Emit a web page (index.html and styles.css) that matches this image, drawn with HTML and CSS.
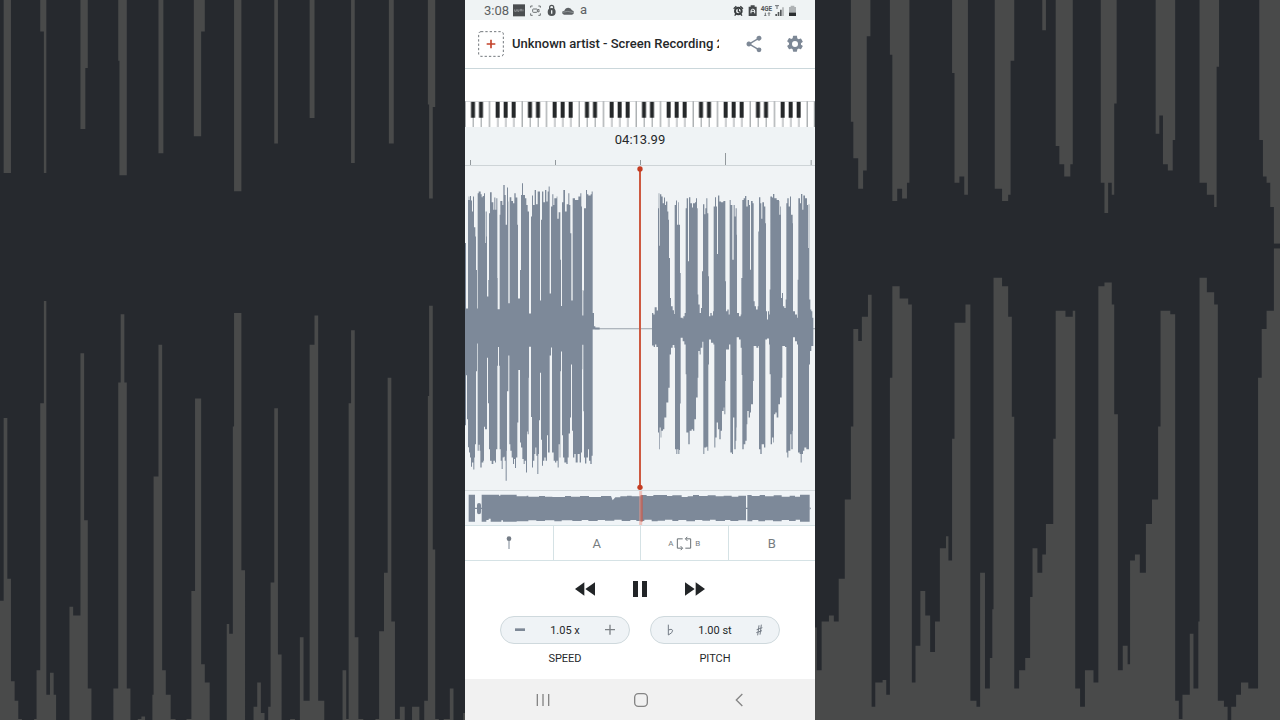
FILE: index.html
```html
<!DOCTYPE html>
<html lang="en">
<head>
<meta charset="utf-8">
<meta name="viewport" content="width=device-width, initial-scale=1">
<title>Music player</title>
<link rel="stylesheet" href="styles.css">
</head>
<body>
<svg class="backdrop" viewBox="0 290 1050 591" preserveAspectRatio="xMidYMid slice" aria-hidden="true">
  <rect class="paper" x="-500" y="0" width="2050" height="1400"/>
  <path class="wave left-wave"/>
  <path class="wave right-wave"/>
  <path class="wave" d="M1044 490h8v4h-8z"/>
</svg>

<main class="phone">
  <div class="status">
    <span class="clock">3:08</span>
    <svg class="status-left" viewBox="0 0 186 42" aria-hidden="true">
      <rect x="0" y="4" width="36" height="36" fill="#4b4e50"/>
      <path d="M5 19v6h5v-6m4 0v6h4v-6m4 6v-6h4v6m4-6v6" stroke="#a7abad" stroke-width="2" fill="none"/>
      <g fill="none" stroke="#6c7072" stroke-width="3"><path d="M53 14V9h6M76 9h6v5M53 31v6h6M76 37h6v-6"/><rect x="59" y="18" width="14" height="10" rx="2"/><path d="M73 21l5-2v8l-5-2"/></g>
      <path d="M110 18v-5a6 6 0 0 1 12 0v6" fill="none" stroke="#505456" stroke-width="4"/>
      <circle cx="116" cy="27" r="12" fill="#505456"/><path d="M116 22v10" stroke="#eff3f4" stroke-width="4"/>
      <path d="M153 35q-6-1-6-7 1-5 7-5 3-9 12-9 8 0 11 8 6 1 6 7-1 5-6 6z" fill="#5e6265"/>
      <path d="M147 28q16-6 36 1" stroke="#a8adaf" stroke-width="2" fill="none"/>
    </svg>
    <span class="letter">a</span>
    <svg class="status-right" viewBox="0 0 204 42" aria-hidden="true">
      <g fill="none" stroke="#383c3e"><circle cx="22" cy="24" r="10" stroke-width="6"/><path d="M22 18v7l5 3M8 17l8-7M28 10l8 7M15 33l-4 5M29 33l4 5" stroke-width="4"/></g>
      <path d="M53 11h6V7h12v4h6v28H53z" fill="#44484a"/><path d="M60 31v-7a5 5 0 0 1 11 0v7m-11-6h11" fill="none" stroke="#eff3f4" stroke-width="3"/>
      <text class="network" x="89" y="23">4GE</text>
      <path d="M103 29v10m-3-3l3 3 3-3M114 39V29m-3 3l3-3 3 3M132 8h12M138 8v10" fill="none" stroke="#6c7072" stroke-width="3"/>
      <g fill="#54585a"><path d="M133 33h5v6h-5zM140 27h5v12h-5zM147 20h5v19h-5z"/><path d="M154 13h4v26h-4z" fill="#a2a6a8"/></g>
      <path d="M174 12h5V8h11v4h5v27h-21z" fill="#aeb2b4"/><path d="M174 29h21v10h-21z" fill="#2b2e30"/>
    </svg>
  </div>

  <header class="header">
    <button class="icon-button add" aria-label="Open track">
      <svg viewBox="0 0 78 78"><rect x="2" y="2" width="74" height="74" rx="7" fill="#fff" stroke="#72777c" stroke-width="3" stroke-dasharray="7 6"/><path d="M39 26v26M26 39h26" stroke="#c4432b" stroke-width="5"/></svg>
    </button>
    <h1 class="title">Unknown artist - Screen Recording 2</h1>
    <button class="icon-button share" aria-label="Share">
      <svg viewBox="0 0 24 24" fill="#7d8896"><path d="M18 16.08c-.76 0-1.44.3-1.96.77L8.91 12.7c.05-.23.09-.46.09-.7s-.04-.47-.09-.7l7.05-4.11A3 3 0 1 0 15 5c0 .24.04.47.09.7L8.04 9.81A3 3 0 1 0 6 15c.79 0 1.5-.31 2.04-.81l7.12 4.16c-.05.21-.08.43-.08.65A2.92 2.92 0 1 0 18 16.08z"/></svg>
    </button>
    <button class="icon-button settings" aria-label="Settings">
      <svg viewBox="0 0 24 24" fill="#7d8896"><path d="M19.14 12.94c.04-.3.06-.61.06-.94s-.02-.64-.07-.94l2.03-1.58a.49.49 0 0 0 .12-.61l-1.92-3.32a.49.49 0 0 0-.59-.22l-2.39.96a7.3 7.3 0 0 0-1.62-.94l-.36-2.54A.48.48 0 0 0 13.92 2h-3.84a.48.48 0 0 0-.48.41l-.36 2.54c-.59.24-1.13.57-1.62.94l-2.39-.96a.49.49 0 0 0-.59.22L2.72 8.47c-.12.21-.08.47.12.61l2.03 1.58c-.05.3-.07.62-.07.94s.02.64.07.94l-2.03 1.58a.49.49 0 0 0-.12.61l1.92 3.32c.12.22.37.29.59.22l2.39-.96c.5.38 1.03.7 1.62.94l.36 2.54c.05.24.24.41.48.41h3.84c.24 0 .44-.17.48-.41l.36-2.54c.59-.24 1.13-.56 1.62-.94l2.39.96c.22.08.47 0 .59-.22l1.92-3.32a.49.49 0 0 0-.12-.61zM12 15.6a3.6 3.6 0 1 1 0-7.2 3.6 3.6 0 0 1 0 7.2z"/></svg>
    </button>
  </header>

  <svg class="keys" viewBox="0 0 1050 78" preserveAspectRatio="none" aria-hidden="true">
    <defs>
      <pattern id="octave" x="-1" y="0" width="171" height="78" patternUnits="userSpaceOnUse">
        <rect width="171" height="78" fill="#fff"/>
        <path d="M1.500 0V78M74.500 0V78" stroke="#868c8f" stroke-width="3"/>
        <path d="M25.500 40V78M49.500 40V78M99.500 40V78M123.500 40V78M147.500 40V78" stroke="#93999c" stroke-width="3"/>
        <path d="M19 2h12v48H19zM43 2h12v48H43zM93 2h12v48H93zM117 2h12v48h-12zM141 2h12v48h-12z" fill="#25282a"/>
      </pattern>
    </defs>
    <rect width="1050" height="78" fill="url(#octave)"/>
    <path d="M1030 0h20v78h-20z" fill="#fff"/>
    <path d="M1048 0V78" stroke="#868c8f" stroke-width="3"/>
    <path d="M0 1H1050" stroke="#b9bec1" stroke-width="2"/>
  </svg>

  <section class="timeline">
    <time class="position">04:13.99</time>
    <svg class="ruler" viewBox="0 9 1050 39" preserveAspectRatio="none" aria-hidden="true">
      <path d="M16.500 30V45M271.500 30V45M526.500 30V45M781.500 9V45M1038.500 30V45" stroke="#92989c" stroke-width="3"/>
      <path d="M0 46.500H1050" stroke="#ced4d7" stroke-width="3"/>
    </svg>
  </section>

  <svg class="stage" viewBox="0 3 1050 975" preserveAspectRatio="none" role="img" aria-label="Waveform">
    <path d="M390 491H640V494H390zM1044 491h6v3h-6z" fill="#99a2ab"/>
    <path class="wave left-wave"/>
    <path class="wave right-wave"/>
    <path d="M525 12V972" stroke="#cd5940" stroke-width="6"/>
    <circle cx="525" cy="12" r="8" fill="#c43c22"/><circle cx="525" cy="970" r="8" fill="#c43c22"/>
  </svg>

  <svg class="overview" viewBox="0 0 1050 102" preserveAspectRatio="none" role="img" aria-label="Track overview">
    <path class="wave" d="M11 11H30V92H11zM30 50H52V54H30zM36 42q0-6 6-6t6 6v22q0 6-6 6t-6-6zM840 50H850V54H840zM1034 48l4 4-4 5z"/>
    <path class="wave" d="M50 11H102V14H106V11H155V16H185V14H190V17H222V15H240V17H262V18H300V15H318V17H345V15H372V18H408V15H438L443 28L451 19H466V16H486V14H500V16H530V12H545V15H565V12H606V15H622V13H650V18H668V16H684V12H702V15H728V13H752V16H776V14H800V17H820V14H843V88H820V90H796V87H780V90H752V86H735V89H712V87H690V91H664V87H640V90H622V86H600V89H578V91H560V86H538V90H514V87H496V90H470V86H448V89H420V87H398V90H370V87H350V90H322V88H290V91H268V88H240V90H214V88H190V91H155V92H114V88H109V92H77V83H71V87H64V92H50z"/>
    <path class="wave" d="M847 12H860V15H884V12H900V16H926V13H950V17H974V14H990V17H1005V11H1034V92H1005V86H992V90H972V87H950V91H924V88H900V91H880V87H862V91H847z"/>
    <path d="M527 0V102" stroke="#ee9b8d" stroke-width="9" opacity=".55"/>
    <path d="M530 12V92" stroke="#bd5b50" stroke-width="7" opacity=".7"/>
  </svg>

  <div class="loop-bar">
    <button aria-label="Add marker"><svg class="marker-icon" viewBox="0 0 18 42"><path d="M9 8v31" stroke="#7d8896" stroke-width="3"/><circle cx="9" cy="8" r="7" fill="#747c86"/></svg></button>
    <button>A</button>
    <button class="loop"><span>A</span><svg class="loop-icon" viewBox="0 0 48 44" fill="none" stroke="#697075" stroke-width="3"><path d="M18 36H4V8h16M30 8h14v28H28"/><path d="M34 2l-6 6 6 6M14 30l6 6-6 6"/></svg><span>B</span></button>
    <button>B</button>
  </div>

  <section class="controls">
    <div class="transport">
      <button aria-label="Rewind"><svg class="skip-icon" viewBox="0 0 60 42" fill="#222527"><path d="M0 21L28 1v40zM31 21L60 1v40z"/></svg></button>
      <button aria-label="Pause"><svg class="pause-icon" viewBox="0 0 42 48" fill="#222527"><path d="M0 0h15v48H0zM27 0h15v48H27z"/></svg></button>
      <button aria-label="Fast forward"><svg class="skip-icon" viewBox="0 0 60 42" fill="#222527"><path d="M60 21L32 1v40zM29 21L0 1v40z"/></svg></button>
    </div>
    <div class="adjusters">
      <div class="adjuster" role="group" aria-labelledby="speed">
        <div class="pill">
          <button aria-label="Slower"><svg viewBox="0 0 36 36"><path d="M3 17h30" stroke="#7d8896" stroke-width="8"/></svg></button>
          <output>1.05 x</output>
          <button aria-label="Faster"><svg viewBox="0 0 36 36"><path d="M3 17h30M18 2v30" stroke="#7d8287" stroke-width="4"/></svg></button>
        </div>
        <span class="caption" id="speed">SPEED</span>
      </div>
      <div class="adjuster" role="group" aria-labelledby="pitch">
        <div class="pill">
          <button aria-label="Lower pitch"><svg viewBox="0 0 36 36" fill="none" stroke="#747c86" stroke-width="3"><path d="M13 2v31q14-7 13-14-3-6-13-1"/></svg></button>
          <output>1.00 st</output>
          <button aria-label="Raise pitch"><svg viewBox="0 0 36 36" fill="none" stroke="#747c86" stroke-width="3"><path d="M15 4l-4 30M22 2l-4 30M8 17l17-6M7 26l17-6"/></svg></button>
        </div>
        <span class="caption" id="pitch">PITCH</span>
      </div>
    </div>
  </section>

  <nav class="nav">
    <button aria-label="Recent apps"><svg viewBox="0 0 42 42" stroke="#858585" stroke-width="4"><path d="M4 3v36M21 3v36M38 3v36"/></svg></button>
    <button aria-label="Home"><svg viewBox="0 0 42 42" fill="none" stroke="#858585" stroke-width="4"><rect x="2" y="2" width="38" height="38" rx="11"/></svg></button>
    <button aria-label="Back"><svg viewBox="0 0 42 42" fill="none" stroke="#858585" stroke-width="4"><path d="M31 3L13 21l18 18"/></svg></button>
  </nav>
</main>
<script src="wave.js"></script>
</body>
</html>
```
FILE: styles.css
```css
* { box-sizing: border-box; }

body {
  margin: 0;
  background: #000;
  color: #25282a;
  font-family: Roboto, "Liberation Sans", sans-serif;
  font-size: 13px;
}

svg { display: block; }

button {
  display: flex;
  align-items: center;
  justify-content: center;
  margin: 0;
  padding: 0;
  border: 0;
  background: none;
  color: inherit;
  font: inherit;
}

.backdrop {
  position: fixed;
  inset: 0;
  width: 100%;
  height: 100%;
  opacity: 0.3;
}

.paper { fill: #f0f3f5; }
.wave { fill: #7d8999; }

.phone {
  position: relative;
  display: flex;
  flex-direction: column;
  width: 100%;
  max-width: 350px;
  min-height: 100vh;
  margin: 0 auto;
  background: #fff;
}

.status {
  display: flex;
  align-items: center;
  height: 20px;
  padding: 0 16px 0 19px;
  background: #eff3f4;
  color: #5c6062;
}

.clock { width: 29px; padding-top: 2px; line-height: 18px; }
.status-left { width: 62px; height: 14px; flex: none; }
.letter { margin-left: 5px; line-height: 20px; }
.status-right { width: 68px; height: 14px; flex: none; margin-left: auto; }
.network { font-size: 19px; font-weight: 700; fill: #54585a; }

.header {
  display: flex;
  align-items: center;
  height: 49px;
  padding: 0 10px 0 13px;
  border-bottom: 1px solid #cbd7db;
}

.icon-button { flex: none; }
.add svg { width: 26px; height: 26px; }
.title {
  flex: 1;
  min-width: 0;
  max-width: 207px;
  margin: 0 0 0 8px;
  overflow: hidden;
  white-space: nowrap;
  font-size: 13px;
  font-weight: 500;
  line-height: 20px;
}
.share { margin-left: auto; }
.share svg, .settings svg { width: 20px; height: 20px; }
.settings { margin-left: 21px; }

.keys { width: 100%; height: 26px; margin-top: 32px; }

.timeline { background: #eff3f5; text-align: center; }
.position { display: block; line-height: 26px; }
.ruler { width: 100%; height: 13px; }

.stage {
  flex: 1 0 300px;
  width: 100%;
  background: #f0f3f5;
}

.overview {
  width: 100%;
  height: 35px;
  border-top: 1px solid #d5dbde;
  background: #f0f4f7;
}

.loop-bar {
  display: grid;
  grid-template-columns: repeat(4, 1fr);
  height: 36px;
  border-top: 1px solid #d5e2e5;
  border-bottom: 1px solid #d5e2e5;
  color: #777c80;
}
.loop-bar button + button { border-left: 1px solid #d5e2e5; }
.marker-icon { width: 6px; height: 14px; }
.loop-bar .loop { gap: 3px; font-size: 8px; }
.loop-icon { width: 16px; height: 15px; }

.controls { height: 118px; padding-top: 18px; }
.transport {
  display: flex;
  align-items: center;
  justify-content: center;
  gap: 38px;
  height: 20px;
}
.skip-icon { width: 20px; height: 14px; }
.pause-icon { width: 14px; height: 16px; }

.adjusters {
  display: flex;
  justify-content: center;
  gap: 20px;
  margin-top: 17px;
  font-size: 11px;
  text-align: center;
}
.adjuster { width: 130px; }
.pill {
  display: flex;
  align-items: center;
  justify-content: space-between;
  height: 28px;
  padding: 0 13px;
  border: 1px solid #cfd9dd;
  border-radius: 14px;
  background: #eff3f6;
}
.pill svg { width: 12px; height: 12px; }
.caption { display: block; line-height: 30px; }

.nav {
  display: grid;
  grid-template-columns: repeat(3, 1fr);
  height: 41px;
  padding: 0 27px 0 29px;
  background: #f1f1f1;
}
.nav svg { width: 14px; height: 14px; }
```
FILE: wave.js
```js
// Each edge lists "x y" pairs: from x onwards the edge stays at height y.
const AXIS = 492;

const leftTop = `0 235 3 432 9 105 11 95 13 105 15 93 18 107 21 140 24 95 27 187 31 215 33 316 36 432 38 85 41 80 47 88 50 97
53 93 57 85 60 235 62 140 65 215 66 396 70 346 72 145 75 82 80 112 85 135 88 98 91 135 94 100 97 340 98 434 104 150 106 108
112 120 115 60 119 90 122 180 126 68 129 110 130 416 134 97 139 108 144 115 148 85 152 98 157 180 159 402 165 316 168 90
171 55 174 90 180 100 184 120 188 140 192 447 198 155 201 92 204 120 209 75 213 118 218 80 225 408 228 165 231 80 235 112
240 75 244 110 248 80 251 65 254 387 258 125 262 88 265 120 268 100 275 95 277 162 281 142 286 285 288 424 291 112 295 75
300 140 305 118 310 85 313 120 316 205 319 408 323 100 330 105 340 95 346 85 349 125 351 376 352 453 355 378 357 130 363 75
366 88 370 92 377 88 380 80 383 445 387 485 391 489 404 492`;

const leftBottom = `0 783 3 633 6 765 9 849 12 865 15 880 18 908 21 895 25 916 28 880 30 840 33 621 36 537 38 860 41 842
44 860 46 910 50 895 55 890 57 788 60 795 66 580 69 717 72 855 75 890 80 900 85 890 90 895 93 855 97 604 99 548 102 604
104 855 107 890 110 915 113 880 116 878 119 890 122 950 125 860 126 681 130 573 133 840 136 860 140 880 144 900 147 885
150 912 153 880 157 775 160 617 165 835 168 850 172 885 176 900 179 890 183 925 186 802 188 810 191 640 192 547 198 758
201 910 204 890 208 870 211 850 214 875 217 930 220 870 222 768 225 625 228 827 231 905 234 890 238 880 242 890 246 813
249 865 254 573 258 549 261 865 266 890 270 895 274 890 278 910 281 840 284 880 286 621 288 561 291 813 294 880 298 895
304 900 308 880 311 808 315 760 318 600 321 800 324 880 328 870 332 895 338 870 344 895 348 865 351 615 352 541 355 741
357 880 360 898 364 880 369 855 372 890 376 900 380 875 383 495 404 492`;

const rightTop = `51 445 55 450 59 428 65 438 69 130 71 85 73 243 75 88 79 95 83 115 87 98 90 120 93 110 97 140 100 165
102 280 105 400 108 425 113 437 117 448 119 120 123 107 126 180 129 112 131 180 135 325 137 460 143 462 145 455 149 445
152 130 155 100 159 290 162 97 166 115 171 128 174 115 180 112 183 100 186 130 188 390 190 420 194 445 198 430 201 320
204 118 208 148 211 130 214 100 217 145 220 335 222 455 226 445 230 453 234 440 236 125 240 97 243 125 246 268 249 92
253 110 258 112 265 108 271 350 273 440 277 435 281 450 284 105 287 120 292 285 296 120 299 155 302 130 305 210 306 445
312 455 317 450 319 340 322 105 326 100 330 93 334 125 338 105 342 120 345 315 348 108 353 115 356 410 359 425 363 435
368 425 370 200 372 97 376 115 379 162 382 112 387 125 391 175 393 440 396 465 399 440 402 450 404 375 406 95 411 98
414 87 418 100 425 105 432 108 433 150 436 125 438 400 441 385 444 425 448 430 452 405 454 115 457 100 461 125 465 95
468 150 473 175 474 440 480 450 486 460 488 345 490 100 495 115 498 87 502 135 505 92 510 100 516 120 519 250 521 118
523 405 526 435 529 440 532 460 535 492`;

const rightBottom = `51 543 56 548 60 540 64 548 69 805 72 855 74 790 77 820 79 800 84 795 88 760 94 715 100 670 104 570
108 550 113 542 118 550 120 855 124 870 127 855 130 870 133 858 135 718 137 520 143 530 148 540 152 630 154 805 160 840
164 800 170 795 174 800 178 765 183 700 188 640 190 560 194 570 197 550 202 532 205 870 208 850 214 848 217 860 220 600
222 525 228 535 235 540 238 850 241 820 245 775 249 795 253 825 257 800 261 740 266 730 268 750 271 650 273 555 278 555
282 540 286 865 291 870 294 760 298 855 302 830 304 790 305 518 312 525 317 550 320 632 322 855 326 840 331 830 335 780
337 740 341 760 345 745 348 720 354 650 356 545 364 550 370 545 372 855 376 870 380 840 387 850 391 525 396 522 402 540
404 630 407 840 411 820 415 835 417 750 421 745 425 760 430 720 435 700 440 640 442 545 450 548 454 865 457 880 460 860
466 810 469 855 473 800 474 518 480 530 486 540 489 865 494 870 497 895 500 870 504 860 508 850 514 855 522 600 525 560
529 545 535 492`;

function edge(text, offset) {
  const n = text.trim().split(/\s+/).map(Number);
  let d = `M${n[0] + offset} ${AXIS}`;
  for (let i = 0; i < n.length; i += 2) d += `H${n[i] + offset}V${n[i + 1]}`;
  return d + `V${AXIS}Z`;
}

function draw(selector, top, bottom, offset) {
  const d = edge(top, offset) + edge(bottom, offset);
  document.querySelectorAll(selector).forEach(path => path.setAttribute("d", d));
}

draw(".left-wave", leftTop, leftBottom, 0);
draw(".right-wave", rightTop, rightBottom, 510);
```
